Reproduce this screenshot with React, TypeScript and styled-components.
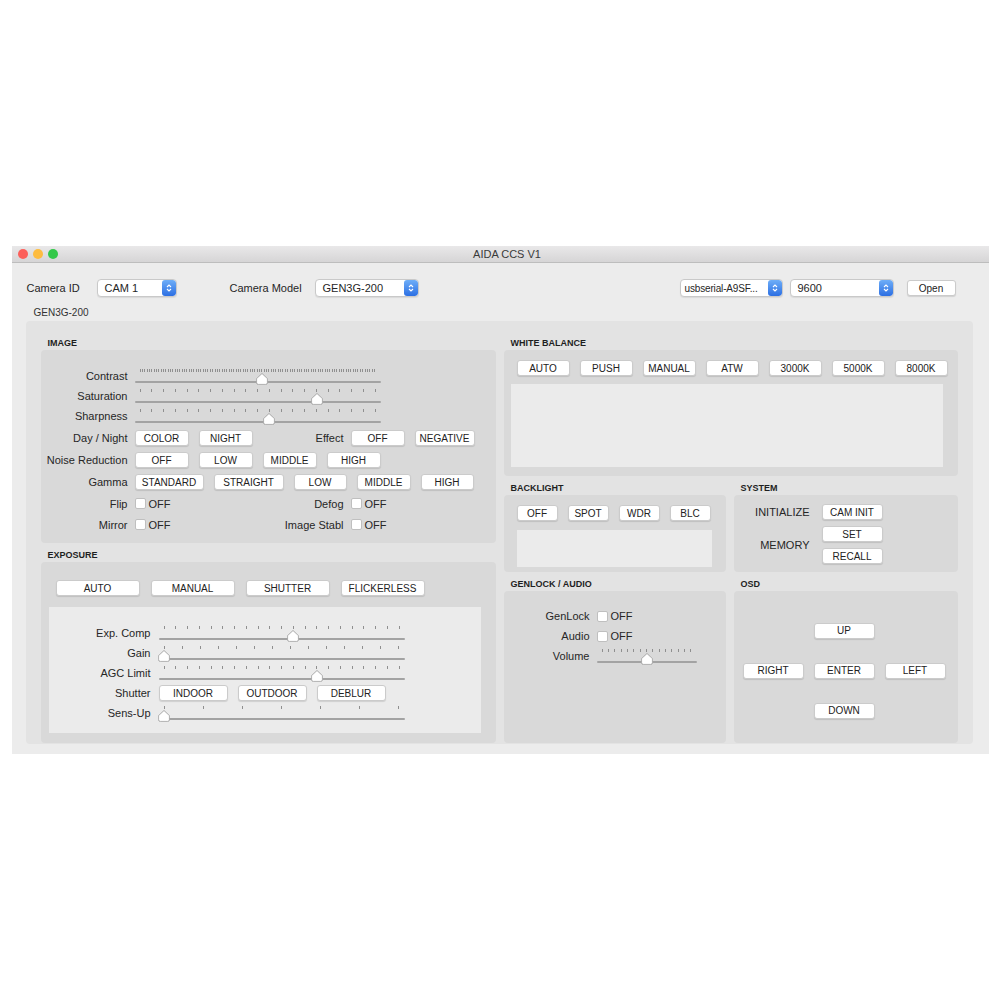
import React from "react";
import styled, { createGlobalStyle } from "styled-components";

const GlobalStyle = createGlobalStyle`
  html, body {
    margin: 0;
    padding: 0;
    background: #ffffff;
  }
  body {
    font-family: "Liberation Sans", Arial, sans-serif;
    color: #262626;
  }
`;

const Page = styled.div`
  display: flex;
  justify-content: center;
  align-items: flex-start;
  padding-top: 246px;
  height: 1000px;
  box-sizing: border-box;
`;

const Window = styled.div`
  width: 977px;
  background: #ececec;
  display: flex;
  flex-direction: column;
`;

const TitleBar = styled.div`
  height: 17px;
  box-sizing: border-box;
  display: grid;
  grid-template-columns: 1fr auto 1fr;
  align-items: center;
  padding-left: 6px;
  background: linear-gradient(#e9e8e9, #d6d5d6);
  border-bottom: 1px solid #bdbdbd;
`;

const Lights = styled.div`
  display: flex;
  gap: 5px;
`;

const Light = styled.span<{ $color: string }>`
  width: 10px;
  height: 10px;
  border-radius: 50%;
  background: ${(p) => p.$color};
`;

const Title = styled.div`
  font-size: 11px;
  color: #3a3a3a;
  padding-left: 8px;
`;

const Content = styled.div`
  padding: 16px 16px 10px 14px;
  display: flex;
  flex-direction: column;
`;

const Toolbar = styled.div`
  display: flex;
  align-items: center;
  height: 18px;
  padding-right: 17px;
`;

const ToolLabel = styled.span<{ $w: number }>`
  width: ${(p) => p.$w}px;
  padding-left: 1px;
  font-size: 11px;
  white-space: nowrap;
`;

const SelectBox = styled.div<{ $w: number; $ml?: number }>`
  width: ${(p) => p.$w}px;
  height: 18px;
  margin-left: ${(p) => p.$ml ?? 0}px;
  box-sizing: border-box;
  background: #ffffff;
  border: 1px solid #c9c9c9;
  border-radius: 4px;
  box-shadow: 0 1px 1px rgba(0, 0, 0, 0.08);
  display: flex;
  align-items: center;
  overflow: hidden;
`;

const SelectText = styled.span<{ $fs: number }>`
  flex: 1;
  padding-left: ${(p) => (p.$fs < 11 ? 4 : 7)}px;
  font-size: ${(p) => p.$fs}px;
  letter-spacing: ${(p) => (p.$fs < 11 ? "-0.15px" : "normal")};
  white-space: nowrap;
`;

const Stepper = styled.span`
  width: 14px;
  height: 16px;
  flex-shrink: 0;
  border-radius: 3px;
  background: linear-gradient(#6eaef8, #2c6fe3);
  display: flex;
  align-items: center;
  justify-content: center;
`;

const Spacer = styled.div<{ $w?: number }>`
  ${(p) => (p.$w ? `width: ${p.$w}px;` : "flex: 1;")}
`;

const GroupTitle = styled.div`
  margin-top: 10px;
  margin-bottom: 2px;
  padding-left: 8px;
  line-height: 12px;
  font-size: 10px;
  color: #333;
`;

const GroupBox = styled.div`
  background: #e3e3e3;
  border-radius: 4px;
  padding: 16px 15px 1px 15px;
  display: grid;
  grid-template-columns: 455px 454px;
  column-gap: 8px;
`;

const Column = styled.div`
  display: flex;
  flex-direction: column;
  gap: 6px;
`;

const SubGrid = styled.div`
  display: grid;
  grid-template-columns: 222px 224px;
  column-gap: 8px;
  row-gap: 6px;
`;

const Section = styled.div`
  display: flex;
  flex-direction: column;
`;

const SectionTitle = styled.div`
  height: 13px;
  line-height: 12px;
  padding-left: 7px;
  font-size: 9px;
  font-weight: bold;
  color: #1f1f1f;
`;

const SectionBox = styled.div<{ $h: number }>`
  height: ${(p) => p.$h}px;
  box-sizing: border-box;
  background: #d9d9d9;
  border-radius: 4px;
  display: flex;
  flex-direction: column;
`;

const Btn = styled.div<{ $w: number }>`
  width: ${(p) => p.$w}px;
  height: 16px;
  box-sizing: border-box;
  background: #ffffff;
  border: 1px solid #cbcbcb;
  border-radius: 3px;
  box-shadow: 0 1px 1px rgba(0, 0, 0, 0.12);
  display: inline-flex;
  align-items: center;
  justify-content: center;
  font-size: 10px;
  color: #222;
  white-space: nowrap;
  flex-shrink: 0;
`;

const BtnRow = styled.div<{ $gap: number; $pl?: number }>`
  display: flex;
  align-items: center;
  gap: ${(p) => p.$gap}px;
  padding-left: ${(p) => p.$pl ?? 0}px;
`;

const LightPanel = styled.div<{ $mt: number }>`
  flex: 1;
  margin-top: ${(p) => p.$mt}px;
  background: #ebebeb;
`;

const FieldLabel = styled.span`
  text-align: right;
  font-size: 11px;
  white-space: nowrap;
`;

/* IMAGE */
const ImageBody = styled(SectionBox)`
  padding: 16px 0 0 6px;
`;

const ImageRow = styled.div<{ $h: number; $mt?: number }>`
  display: grid;
  grid-template-columns: 81px 119px 83px 1fr;
  column-gap: 7px;
  align-items: center;
  height: ${(p) => p.$h}px;
  margin-top: ${(p) => p.$mt ?? 0}px;
`;

const Wide = styled.div`
  grid-column: 2 / 5;
  display: flex;
  gap: 10px;
  align-items: center;
`;

const Pair = styled.div`
  display: flex;
  gap: 10px;
  align-items: center;
`;

const CheckField = styled.div`
  display: flex;
  align-items: center;
  gap: 3px;
  font-size: 11px;
`;

const CheckBox = styled.span`
  width: 11px;
  height: 11px;
  box-sizing: border-box;
  background: #fff;
  border: 1px solid #bfbfbf;
  border-radius: 2px;
`;

/* EXPOSURE */
const ExposureBody = styled(SectionBox)`
  padding: 18px 15px 10px 8px;
`;

const ExpPanel = styled.div`
  flex: 1;
  margin-top: 11px;
  background: #ebebeb;
  padding-top: 16px;
`;

const FormRow = styled.div<{ $label: number; $gap: number }>`
  display: grid;
  grid-template-columns: ${(p) => p.$label}px 1fr;
  column-gap: ${(p) => p.$gap}px;
  align-items: center;
  height: 20px;
`;

/* WB / BACKLIGHT */
const PaddedBox = styled(SectionBox)<{ $pad: string }>`
  padding: ${(p) => p.$pad};
`;

/* SYSTEM */
const SystemGrid = styled.div`
  display: grid;
  grid-template-columns: 76px 61px;
  grid-template-rows: 16px 16px 16px;
  column-gap: 12px;
  row-gap: 6px;
  align-items: center;
  padding-top: 9px;
`;

const SpanLabel = styled(FieldLabel)`
  grid-row: 2 / 4;
`;

const Stack = styled.div`
  grid-row: 2 / 4;
  grid-column: 2;
  display: flex;
  flex-direction: column;
  gap: 6px;
`;

/* OSD */
const OsdGrid = styled.div`
  display: grid;
  grid-template-columns: repeat(3, 61px);
  grid-template-rows: repeat(3, 16px);
  column-gap: 10px;
  row-gap: 24px;
  padding: 29px 0 0 9px;
`;

const OsdCell = styled.div<{ $col: number; $row: number }>`
  grid-column: ${(p) => p.$col};
  grid-row: ${(p) => p.$row};
`;

/* Slider */
const SliderBody = styled.div<{ $w: number }>`
  position: relative;
  width: ${(p) => p.$w}px;
  height: 20px;
  display: flex;
  flex-direction: column;
`;

const TickRow = styled.div`
  margin: 3px 5px 0;
  height: 3px;
  display: flex;
  justify-content: space-between;
`;

const Tick = styled.span`
  width: 1px;
  height: 3px;
  background: #8f8f8f;
`;

const Rail = styled.div`
  margin-top: 9px;
  height: 2px;
  border-radius: 1px;
  background: #a3a3a3;
`;

const Thumb = styled.svg`
  position: absolute;
  top: 7px;
  filter: drop-shadow(0 0.5px 0.5px rgba(0, 0, 0, 0.25));
`;

function Slider({ width, ticks, value }: { width: number; ticks: number; value: number }) {
  const left = 5 + value * (width - 10) - 6;
  return (
    <SliderBody $w={width}>
      <TickRow>
        {Array.from({ length: ticks }).map((_, i) => (
          <Tick key={i} />
        ))}
      </TickRow>
      <Rail />
      <Thumb width={12} height={12} viewBox="0 0 12 12" style={{ left }}>
        <path
          d="M6 0.6 L11.4 5.6 V9.6 Q11.4 11.4 9.6 11.4 H2.4 Q0.6 11.4 0.6 9.6 V5.6 Z"
          fill="#ffffff"
          stroke="#a9a9a9"
          strokeWidth="0.8"
        />
      </Thumb>
    </SliderBody>
  );
}

function Select({ w, text, ml, fs = 11 }: { w: number; text: string; ml?: number; fs?: number }) {
  return (
    <SelectBox $w={w} $ml={ml}>
      <SelectText $fs={fs}>{text}</SelectText>
      <Stepper>
        <svg width="6" height="10" viewBox="0 0 6 10">
          <path d="M1 4 L3 2 L5 4 M1 6 L3 8 L5 6" stroke="#fff" strokeWidth="1.1" fill="none" />
        </svg>
      </Stepper>
    </SelectBox>
  );
}

function Off() {
  return (
    <CheckField>
      <CheckBox />
      OFF
    </CheckField>
  );
}

export default function App() {
  return (
    <>
      <GlobalStyle />
      <Page>
        <Window>
          <TitleBar>
            <Lights>
              <Light $color="#fc605b" />
              <Light $color="#fdbc40" />
              <Light $color="#34c84a" />
            </Lights>
            <Title>AIDA CCS V1</Title>
            <span />
          </TitleBar>
          <Content>
            <Toolbar>
              <ToolLabel $w={70}>Camera ID</ToolLabel>
              <Select w={80} text="CAM 1" />
              <Spacer $w={52} />
              <ToolLabel $w={85}>Camera Model</ToolLabel>
              <Select w={104} text="GEN3G-200" />
              <Spacer />
              <Select w={103} text="usbserial-A9SF..." fs={10} />
              <Select w={104} text="9600" ml={7} />
              <Spacer $w={13} />
              <Btn $w={49}>Open</Btn>
            </Toolbar>
            <GroupTitle>GEN3G-200</GroupTitle>
            <GroupBox>
              <Column>
                <Section>
                  <SectionTitle>IMAGE</SectionTitle>
                  <ImageBody $h={193}>
                    <ImageRow $h={20}>
                      <FieldLabel>Contrast</FieldLabel>
                      <Wide>
                        <Slider width={246} ticks={101} value={0.52} />
                      </Wide>
                    </ImageRow>
                    <ImageRow $h={20}>
                      <FieldLabel>Saturation</FieldLabel>
                      <Wide>
                        <Slider width={246} ticks={21} value={0.75} />
                      </Wide>
                    </ImageRow>
                    <ImageRow $h={20}>
                      <FieldLabel>Sharpness</FieldLabel>
                      <Wide>
                        <Slider width={246} ticks={21} value={0.55} />
                      </Wide>
                    </ImageRow>
                    <ImageRow $h={22} $mt={1}>
                      <FieldLabel>Day / Night</FieldLabel>
                      <Pair>
                        <Btn $w={54}>COLOR</Btn>
                        <Btn $w={54}>NIGHT</Btn>
                      </Pair>
                      <FieldLabel>Effect</FieldLabel>
                      <Pair>
                        <Btn $w={54}>OFF</Btn>
                        <Btn $w={60}>NEGATIVE</Btn>
                      </Pair>
                    </ImageRow>
                    <ImageRow $h={22}>
                      <FieldLabel>Noise Reduction</FieldLabel>
                      <Wide>
                        <Btn $w={54}>OFF</Btn>
                        <Btn $w={54}>LOW</Btn>
                        <Btn $w={54}>MIDDLE</Btn>
                        <Btn $w={54}>HIGH</Btn>
                      </Wide>
                    </ImageRow>
                    <ImageRow $h={22}>
                      <FieldLabel>Gamma</FieldLabel>
                      <Wide>
                        <Btn $w={69}>STANDARD</Btn>
                        <Btn $w={70}>STRAIGHT</Btn>
                        <Btn $w={53}>LOW</Btn>
                        <Btn $w={54}>MIDDLE</Btn>
                        <Btn $w={53}>HIGH</Btn>
                      </Wide>
                    </ImageRow>
                    <ImageRow $h={21}>
                      <FieldLabel>Flip</FieldLabel>
                      <Off />
                      <FieldLabel>Defog</FieldLabel>
                      <Off />
                    </ImageRow>
                    <ImageRow $h={21}>
                      <FieldLabel>Mirror</FieldLabel>
                      <Off />
                      <FieldLabel>Image Stabl</FieldLabel>
                      <Off />
                    </ImageRow>
                  </ImageBody>
                </Section>
                <Section>
                  <SectionTitle>EXPOSURE</SectionTitle>
                  <ExposureBody $h={181}>
                    <BtnRow $gap={11} $pl={7}>
                      <Btn $w={84}>AUTO</Btn>
                      <Btn $w={84}>MANUAL</Btn>
                      <Btn $w={84}>SHUTTER</Btn>
                      <Btn $w={84}>FLICKERLESS</Btn>
                    </BtnRow>
                    <ExpPanel>
                      <FormRow $label={102} $gap={8}>
                        <FieldLabel>Exp. Comp</FieldLabel>
                        <Slider width={246} ticks={21} value={0.55} />
                      </FormRow>
                      <FormRow $label={102} $gap={8}>
                        <FieldLabel>Gain</FieldLabel>
                        <Slider width={246} ticks={14} value={0} />
                      </FormRow>
                      <FormRow $label={102} $gap={8}>
                        <FieldLabel>AGC Limit</FieldLabel>
                        <Slider width={246} ticks={21} value={0.65} />
                      </FormRow>
                      <FormRow $label={102} $gap={8}>
                        <FieldLabel>Shutter</FieldLabel>
                        <BtnRow $gap={10}>
                          <Btn $w={69}>INDOOR</Btn>
                          <Btn $w={69}>OUTDOOR</Btn>
                          <Btn $w={69}>DEBLUR</Btn>
                        </BtnRow>
                      </FormRow>
                      <FormRow $label={102} $gap={8}>
                        <FieldLabel>Sens-Up</FieldLabel>
                        <Slider width={246} ticks={7} value={0} />
                      </FormRow>
                    </ExpPanel>
                  </ExposureBody>
                </Section>
              </Column>
              <Column>
                <Section>
                  <SectionTitle>WHITE BALANCE</SectionTitle>
                  <PaddedBox $h={126} $pad="10px 15px 9px 7px">
                    <BtnRow $gap={10} $pl={6}>
                      <Btn $w={53}>AUTO</Btn>
                      <Btn $w={53}>PUSH</Btn>
                      <Btn $w={53}>MANUAL</Btn>
                      <Btn $w={53}>ATW</Btn>
                      <Btn $w={53}>3000K</Btn>
                      <Btn $w={53}>5000K</Btn>
                      <Btn $w={53}>8000K</Btn>
                    </BtnRow>
                    <LightPanel $mt={8} />
                  </PaddedBox>
                </Section>
                <SubGrid>
                  <Section>
                    <SectionTitle>BACKLIGHT</SectionTitle>
                    <PaddedBox $h={77} $pad="10px 14px 5px 13px">
                      <BtnRow $gap={10}>
                        <Btn $w={41}>OFF</Btn>
                        <Btn $w={41}>SPOT</Btn>
                        <Btn $w={41}>WDR</Btn>
                        <Btn $w={41}>BLC</Btn>
                      </BtnRow>
                      <LightPanel $mt={9} />
                    </PaddedBox>
                  </Section>
                  <Section>
                    <SectionTitle>SYSTEM</SectionTitle>
                    <SectionBox $h={77}>
                      <SystemGrid>
                        <FieldLabel>INITIALIZE</FieldLabel>
                        <Btn $w={61}>CAM INIT</Btn>
                        <SpanLabel>MEMORY</SpanLabel>
                        <Stack>
                          <Btn $w={61}>SET</Btn>
                          <Btn $w={61}>RECALL</Btn>
                        </Stack>
                      </SystemGrid>
                    </SectionBox>
                  </Section>
                  <Section>
                    <SectionTitle>GENLOCK / AUDIO</SectionTitle>
                    <PaddedBox $h={152} $pad="15px 0 0 10px">
                      <FormRow $label={76} $gap={7}>
                        <FieldLabel>GenLock</FieldLabel>
                        <Off />
                      </FormRow>
                      <FormRow $label={76} $gap={7}>
                        <FieldLabel>Audio</FieldLabel>
                        <Off />
                      </FormRow>
                      <FormRow $label={76} $gap={7}>
                        <FieldLabel>Volume</FieldLabel>
                        <Slider width={100} ticks={15} value={0.5} />
                      </FormRow>
                    </PaddedBox>
                  </Section>
                  <Section>
                    <SectionTitle>OSD</SectionTitle>
                    <SectionBox $h={152}>
                      <OsdGrid>
                        <OsdCell $col={2} $row={1}>
                          <Btn $w={61}>UP</Btn>
                        </OsdCell>
                        <OsdCell $col={1} $row={2}>
                          <Btn $w={61}>RIGHT</Btn>
                        </OsdCell>
                        <OsdCell $col={2} $row={2}>
                          <Btn $w={61}>ENTER</Btn>
                        </OsdCell>
                        <OsdCell $col={3} $row={2}>
                          <Btn $w={61}>LEFT</Btn>
                        </OsdCell>
                        <OsdCell $col={2} $row={3}>
                          <Btn $w={61}>DOWN</Btn>
                        </OsdCell>
                      </OsdGrid>
                    </SectionBox>
                  </Section>
                </SubGrid>
              </Column>
            </GroupBox>
          </Content>
        </Window>
      </Page>
    </>
  );
}
